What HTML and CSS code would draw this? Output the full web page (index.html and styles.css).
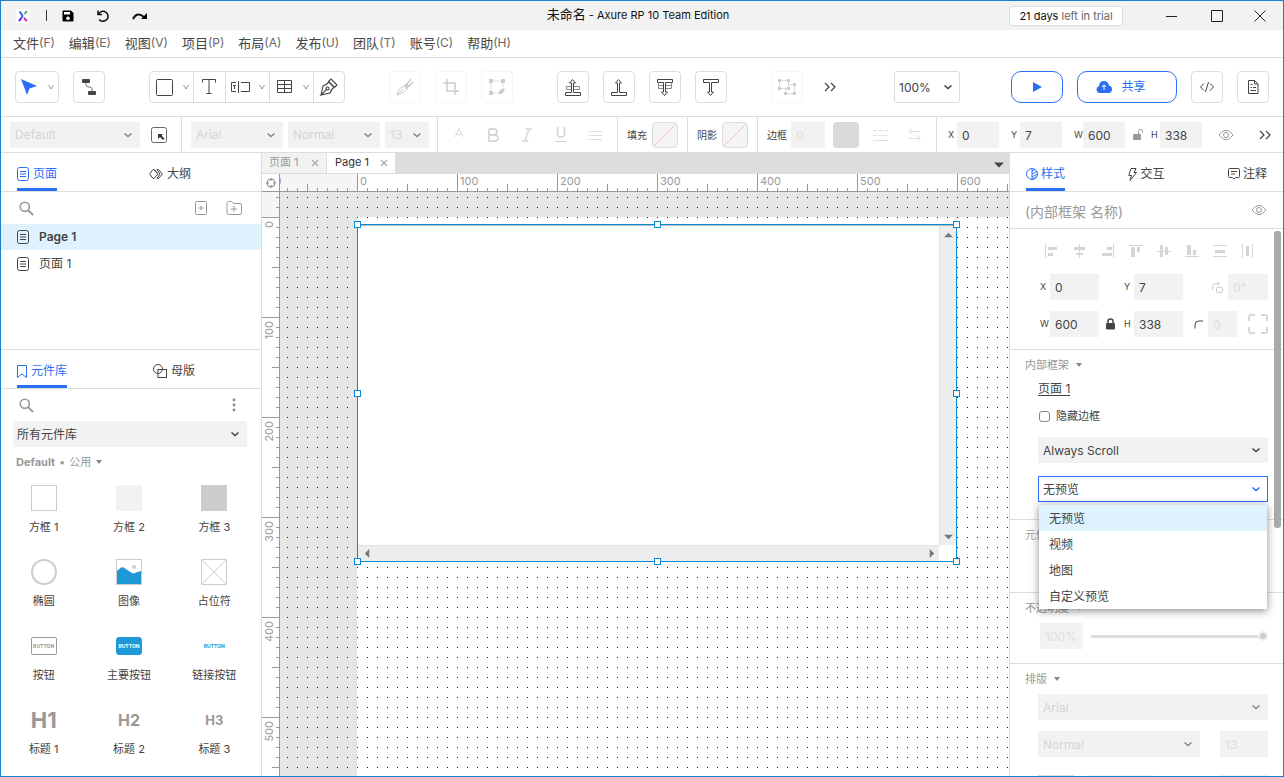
FILE: index.html
```html
<!DOCTYPE html>
<html lang="zh-CN">
<head>
<meta charset="utf-8">
<title>未命名 - Axure RP 10 Team Edition</title>
<link rel="stylesheet" href="styles.css">
</head>
<body>
<svg class="defs" aria-hidden="true">
  <symbol id="chev" viewBox="0 0 10 10"><path d="M1.500 3.500L5 6.500L8.500 3.500" fill="none" stroke="currentColor" stroke-width="1.600"/></symbol>
  <symbol id="thin" viewBox="0 0 8 8"><path d="M1.500 2 L4 6 L6.500 2" fill="none" stroke="currentColor" stroke-width="1"/></symbol>
  <symbol id="tri" viewBox="0 0 8 6"><path d="M1 1 H7 L4 5 Z" fill="currentColor"/></symbol>
  <symbol id="more" viewBox="0 0 12 10"><path d="M1 1 L5 5 L1 9 M7 1 L11 5 L7 9" fill="none" stroke="currentColor" stroke-width="1.200"/></symbol>
  <symbol id="page" viewBox="0 0 12 14"><g fill="none" stroke="currentColor"><rect x=".5" y=".5" width="11" height="13" rx="2"/><path d="M3 4.500H9M3 7H9M3 9.500H9"/></g></symbol>
  <symbol id="search" viewBox="0 0 15 15"><circle cx="5.800" cy="5.800" r="4.600" fill="none" stroke="currentColor" stroke-width="1.600"/><path d="M9 9L14 14" stroke="currentColor" stroke-width="2"/></symbol>
  <symbol id="eye" viewBox="0 0 16 12"><g fill="none" stroke="currentColor"><path d="M1 6 Q8 -3.500 15 6 Q8 15.500 1 6Z"/><circle cx="8" cy="6" r="2.500"/></g></symbol>
  <symbol id="close" viewBox="0 0 8 8"><path d="M1 1L7 7M7 1L1 7" stroke="currentColor" stroke-width="1.200"/></symbol>
</svg>
<div class="window">
  <header class="titlebar">
    <div class="quick">
      <svg class="logo" viewBox="0 0 14 14"><rect width="14" height="14" rx="2" fill="#fff"/><g fill="none" stroke-width="2"><path d="M3.500 2.500L6 5.800Q7 7 6 8.200L3 12" stroke="#2a62ee"/><path d="M3 12L5 9.500" stroke="#7b2ff0"/><path d="M10.800 2L8.500 5" stroke="#3db54a"/><path d="M8 9L10.800 12.200" stroke="#c924c9"/></g></svg>
      <span class="bar"></span>
      <button class="plain" aria-label="保存"><svg class="i12" viewBox="0 0 12 12"><path d="M1.500 .5H9L11.500 3V10.500Q11.500 11.500 10.500 11.500H1.500Q.5 11.500 .5 10.500V1.500Q.5 .5 1.500 .5Z"/><path d="M2 2H8V4.500H2Z" fill="#fff"/><circle cx="6" cy="8.200" r="1.800" fill="#fff"/></svg></button>
      <button class="plain" aria-label="撤销"><svg class="i12" viewBox="0 0 12 12"><path d="M1 .5V4.500H5M1.500 4.200A5 5 0 1 1 2.200 9.500" fill="none" stroke="#111" stroke-width="1.500"/></svg></button>
      <button class="plain" aria-label="重做"><svg class="i16" viewBox="0 0 16 12"><path d="M1 9Q5 1 12 7" fill="none" stroke="#111" stroke-width="2"/><path d="M15 3V9H9Z"/></svg></button>
    </div>
    <h1 class="title"><span>未命名</span> - Axure RP 10 Team Edition</h1>
    <div class="winctl">
      <button class="trial"><b>21 days</b> left in trial</button>
      <button class="plain" aria-label="最小化"><svg class="i12" viewBox="0 0 12 12"><path d="M0 6.500H11" stroke="#222"/></svg></button>
      <button class="plain" aria-label="最大化"><svg class="i12" viewBox="0 0 12 12"><path d="M.5 .5H11.500V11.500H.5Z" fill="none" stroke="#222"/></svg></button>
      <button class="plain" aria-label="关闭"><svg class="i12" viewBox="0 0 12 12"><path d="M.5 .5L11.500 11.500M11.500 .5L.5 11.500" stroke="#222"/></svg></button>
    </div>
  </header>

  <nav class="menubar">
    <button>文件<span>(F)</span></button><button>编辑<span>(E)</span></button><button>视图<span>(V)</span></button><button>项目<span>(P)</span></button><button>布局<span>(A)</span></button><button>发布<span>(U)</span></button><button>团队<span>(T)</span></button><button>账号<span>(C)</span></button><button>帮助<span>(H)</span></button>
  </nav>

  <div class="toolbar">
    <div class="cluster">
      <button class="tool wide" aria-label="选择"><svg class="i20" viewBox="0 0 20 20"><path d="M2 2L18 9L10.500 11.500L8 18Z" fill="#2a6ef5"/></svg><svg class="i8"><use href="#thin"/></svg></button>
      <button class="tool" aria-label="连接"><svg class="i20" viewBox="0 0 20 20"><rect x="3" y="2" width="8" height="4" rx="1" fill="#444"/><rect x="9" y="14" width="8" height="4" rx="1" fill="#444"/><path d="M7 6V8Q7 10 10 10Q13 10 13 12V14" fill="none" stroke="#777"/></svg></button>
    </div>
    <div class="segment">
      <button class="wide" aria-label="矩形"><svg class="i20" viewBox="0 0 20 20"><rect x="2.500" y="2.500" width="16" height="16" rx="1" fill="none" stroke="#444"/></svg><svg class="i8"><use href="#thin"/></svg></button>
      <button aria-label="文本"><svg class="i20" viewBox="0 0 20 20"><path d="M2.500 5.500V2.500H15.500V5.500M9 2.500V16.500M6.500 16.500H11.500" fill="none" stroke="#444"/></svg></button>
      <button class="wide" aria-label="表单"><svg class="i20" viewBox="0 0 20 20"><path d="M6 5.500H1.500V14.500H6M8.500 4V16M11 5.500H19.500V14.500H11M3 8.500H6M4.500 8.500V12" fill="none" stroke="#444"/></svg><svg class="i8"><use href="#thin"/></svg></button>
      <button class="wide" aria-label="表格"><svg class="i20" viewBox="0 0 20 20"><path d="M3.500 3.500H17.500V15.500H3.500ZM3.500 7.500H17.500M3.500 11.500H17.500M10.500 3.500V15.500" fill="none" stroke="#444"/></svg><svg class="i8"><use href="#thin"/></svg></button>
      <button aria-label="钢笔"><svg class="i20" viewBox="0 0 20 20"><g fill="none" stroke="#444" stroke-width="1.100"><path d="M2 18L4 9Q7 8 10 5L15 10Q12 13 11 16L2 18L8 12"/><circle cx="8.500" cy="11.500" r="1.500"/><path d="M9.500 4.500L12 2L18 8L15.500 10.500Z"/></g></svg></button>
    </div>
    <div class="cluster off">
      <button class="tool" disabled aria-label="切割"><svg class="i20" viewBox="0 0 20 20"><path d="M2 18Q3 11 9 9L12 12L9 15Z" fill="none" stroke="#ccc"/><path d="M2 18L8 12" stroke="#ccc"/><path d="M9 8L12 6L15 9L12 12Z" fill="#ccc"/><path d="M12 7L16 2M14 9L18 5" stroke="#ccc" stroke-width="1.500"/></svg></button>
      <button class="tool" disabled aria-label="裁剪"><svg class="i20" viewBox="0 0 20 20"><path d="M6 2V14H18M2 6H14V18" fill="none" stroke="#ccc" stroke-width="1.500"/></svg></button>
      <button class="tool" disabled aria-label="编辑点"><svg class="i20" viewBox="0 0 20 20"><path d="M4 4H16V10M4 4V16H10" fill="none" stroke="#ddd"/><path d="M2 2H6V6H2ZM14 2H18V6H14ZM2 14H6V18H2ZM11 17L12 14L16 11L18 13L15 17Z" fill="#ccc"/></svg></button>
    </div>
    <div class="cluster">
      <button class="tool" aria-label="置于顶层"><svg class="i20" viewBox="0 0 20 20"><g fill="none" stroke="#444"><path d="M2.500 15.500H8.500V6H6.500L9.500 2.500L12.500 6H10.500V15.500H17.500V18.500H2.500Z"/><path d="M8 9.500H3.500V12.500H8M11 9.500H16.500V12.500H11" stroke="#888"/></g></svg></button>
      <button class="tool" aria-label="上移一层"><svg class="i20" viewBox="0 0 20 20"><path d="M2.500 15.500H8.500V6H6.500L9.500 2.500L12.500 6H10.500V15.500H17.500V18.500H2.500Z" fill="none" stroke="#444"/></svg></button>
      <button class="tool" aria-label="置于底层"><svg class="i20" viewBox="0 0 20 20"><g fill="none" stroke="#444"><path d="M2.500 5.500H8.500V15H6.500L9.500 18.500L12.500 15H10.500V5.500H17.500V2.500H2.500Z"/><path d="M8 8.500H3.500V5.500M8 11.500H3.500V8.500M11 8.500H16.500V5.500M11 11.500H16.500V8.500" stroke="#888"/></g></svg></button>
      <button class="tool" aria-label="下移一层"><svg class="i20" viewBox="0 0 20 20"><path d="M2.500 5.500H8.500V15H6.500L9.500 18.500L12.500 15H10.500V5.500H17.500V2.500H2.500Z" fill="none" stroke="#444"/></svg></button>
    </div>
    <div class="cluster off">
      <button class="tool" disabled aria-label="组合"><svg class="i20" viewBox="0 0 20 20"><path d="M2.500 3.500H11.500V11.500H2.500ZM8.500 16.500H17.500V7.500H12M8.500 12V16" fill="none" stroke="#ddd"/><path d="M1 2H4V5H1ZM10 2H13V5H10ZM1 10H4V13H1ZM10 10H13V13H10ZM16 6H19V9H16ZM16 15H19V18H16ZM7 15H10V18H7Z" fill="#ccc"/></svg></button>
    </div>
    <button class="plain morebtn" aria-label="更多"><svg class="i12"><use href="#more"/></svg></button>
    <div class="pick zoom"><select aria-label="缩放"><option>100%</option></select><svg><use href="#chev"/></svg></div>
    <div class="cluster actions">
      <button class="tool blue play" aria-label="预览"><svg class="i12" viewBox="0 0 12 12"><path d="M2 1L11 6L2 11Z" fill="#2a6ef5"/></svg></button>
      <button class="tool blue share"><svg class="i16" viewBox="0 0 16 12"><path d="M4 12A3.600 3.600 0 0 1 3 5Q3.500 0 8 0Q12 0 13 4.500A3.800 3.800 0 0 1 12.500 12Z" fill="#2a6ef5"/><path d="M8 9V4M6 6L8 3.800L10 6" fill="none" stroke="#fff"/></svg>共享</button>
      <button class="tool" aria-label="代码"><svg class="i16" viewBox="0 0 16 12"><path d="M5 2.500L1.500 6L5 9.500M11 2.500L14.500 6L11 9.500M9.500 1L6.500 11" fill="none" stroke="#444"/></svg></button>
      <button class="tool" aria-label="文档"><svg class="i16" viewBox="0 0 16 16"><path d="M3.500 1.500H9.500L13 5V14.500H3.500ZM9.500 1.500V5H13M5.500 8.500H7M8 8.500H11M5.500 11.500H11M5.500 5.500H7.500" fill="none" stroke="#444"/></svg></button>
    </div>
  </div>

  <div class="stylebar">
    <div class="grp g1">
      <div class="pick dim w130"><select disabled aria-label="样式"><option>Default</option></select><svg><use href="#chev"/></svg></div>
      <button class="plain" aria-label="更新样式"><svg class="i16" viewBox="0 0 16 16"><rect x=".5" y=".5" width="15" height="15" rx="2" fill="none" stroke="#666"/><path d="M7 7H12L10.500 8.500L13.500 11.500L12 13L9 10L7 12Z" fill="#333"/></svg></button>
    </div>
    <div class="grp g2">
      <div class="pick dim w92"><select disabled aria-label="字体"><option>Arial</option></select><svg><use href="#chev"/></svg></div>
      <div class="pick dim w92"><select disabled aria-label="字形"><option>Normal</option></select><svg><use href="#chev"/></svg></div>
      <div class="pick dim w44"><select disabled aria-label="字号"><option>13</option></select><svg><use href="#chev"/></svg></div>
    </div>
    <div class="grp g3">
      <button class="plain" disabled aria-label="颜色"><svg class="i16" viewBox="0 0 16 16"><path d="M4 10L8 1.500L12 10M5.500 7.500H10.500" fill="none" stroke="#ddd"/></svg></button>
      <button class="plain" disabled aria-label="粗体"><svg class="i16" viewBox="0 0 16 16"><path d="M4 2H8.500Q12 2 12 5Q12 8 8.500 8H4M8.500 8Q13 8 13 11Q13 14 9 14H4V2" fill="none" stroke="#d8d8d8" stroke-width="1.800"/></svg></button>
      <button class="plain" disabled aria-label="斜体"><svg class="i16" viewBox="0 0 16 16"><path d="M6.500 2H13M3 14H9.500M10 2L6 14" fill="none" stroke="#d8d8d8" stroke-width="1.500"/></svg></button>
      <button class="plain" disabled aria-label="下划线"><svg class="i16" viewBox="0 0 16 16"><path d="M4.500 0V6.500Q4.500 10 8 10Q11.500 10 11.500 6.500V0" fill="none" stroke="#d8d8d8" stroke-width="1.800"/><path d="M3 14.500H13" stroke="#ccc"/></svg></button>
      <button class="plain" disabled aria-label="列表"><svg class="i16" viewBox="0 0 16 16"><path d="M4 4.500H15M4 8.500H15M4 12.500H15M1 4.500H3M1 8.500H3M1 12.500H3" stroke="#ddd"/></svg></button>
    </div>
    <div class="grp g4"><span>填充</span><button class="swatch none" aria-label="填充"><svg viewBox="0 0 24 24"><path d="M1 23L23 1" stroke="#f8c4c0"/></svg></button></div>
    <div class="grp g4"><span>阴影</span><button class="swatch none" aria-label="阴影"><svg viewBox="0 0 24 24"><path d="M1 23L23 1" stroke="#f8c4c0"/></svg></button></div>
    <div class="grp g5"><label for="bw">边框</label><input id="bw" class="fld w34" value="0" disabled><button class="swatch solid" aria-label="边框颜色"></button>
      <button class="plain line" disabled aria-label="线型"><svg class="i16" viewBox="0 0 16 16"><path d="M1 3.500H16" stroke="#ddd" stroke-dasharray="4 2"/><path d="M1 8.500H16" stroke="#ddd" stroke-dasharray="2 1"/><path d="M1 13.500H16" stroke="#ddd"/></svg></button>
      <button class="plain" disabled aria-label="箭头"><svg class="i16" viewBox="0 0 16 16"><path d="M14 4.500H3M6 1.500L3 4.500L6 7.500M3 11.500H14M11 8.500L14 11.500L11 14.500" fill="none" stroke="#ddd"/></svg></button></div>
    <div class="grp g6">
      <label for="tx">X</label><input id="tx" class="fld w42" value="0">
      <label for="ty">Y</label><input id="ty" class="fld w42" value="7">
      <label for="tw">W</label><input id="tw" class="fld w42" value="600">
      <svg class="lock" viewBox="0 0 10 12"><rect y="5" width="8" height="6" rx="1" fill="#999"/><path d="M5.500 5V2.500Q5.500 .5 7.500 .5Q9.500 .5 9.500 2.500V3.500" fill="none" stroke="#999"/></svg>
      <label for="th">H</label><input id="th" class="fld w42" value="338">
      <button class="plain eye" aria-label="显示"><svg class="i16e"><use href="#eye"/></svg></button>
      <button class="plain" aria-label="更多"><svg class="i12"><use href="#more"/></svg></button>
    </div>
  </div>

  <main class="work">
    <aside class="left">
      <section class="pages">
        <div class="tabs"><button class="tab on"><svg class="pg"><use href="#page"/></svg>页面</button><button class="tab t2"><svg class="i14" viewBox="0 0 14 12"><path d="M5 1.500H4L1 5.500Q.5 6 1 6.500L4 10.500H5L9 6ZM5 1.500L9 6M8 1.500H9.500L13 5.500Q13.500 6 13 6.500L9.500 10.500H8M8 1.500L11 6L8 10.500" fill="none" stroke="#444"/></svg>大纲</button></div>
        <div class="find"><svg class="i14s"><use href="#search"/></svg><span class="fill"></span>
          <button class="plain" aria-label="添加页面"><svg class="pg" viewBox="0 0 12 14"><path d="M1.500 .5H10.500Q11.500 .5 11.500 1.500V12.500Q11.500 13.500 10.500 13.500H1.500Q.5 13.500 .5 12.500V1.500Q.5 .5 1.500 .5ZM3.500 7H8.500M6 4.500V9.500" fill="none" stroke="#999"/></svg></button>
          <button class="plain" aria-label="添加文件夹"><svg class="i16" viewBox="0 0 16 16"><path d="M2 1.500H5.500L7.500 3.500H14Q15.500 3.500 15.500 5V13Q15.500 14.500 14 14.500H2.500Q1 14.500 1 13V2.500ZM5 9H11M8 6V12" fill="none" stroke="#999"/></svg></button></div>
        <ul class="list"><li class="sel"><svg class="pg"><use href="#page"/></svg>Page 1</li><li><svg class="pg"><use href="#page"/></svg><span>页面 1</span></li></ul>
      </section>
      <section class="library">
        <div class="tabs"><button class="tab on"><svg class="bm" viewBox="0 0 10 13"><path d="M.5 .5H9.500V12.500L5 9L.5 12.500Z" fill="none" stroke="currentColor"/></svg>元件库</button><button class="tab t3"><svg class="i14b" viewBox="0 0 14 14"><circle cx="5" cy="5" r="4.500" fill="none" stroke="#444"/><rect x="5" y="5.500" width="8.500" height="8" fill="none" stroke="#444"/></svg>母版</button></div>
        <div class="find"><svg class="i14s"><use href="#search"/></svg><span class="fill"></span>
          <button class="plain" aria-label="选项"><svg class="i16" viewBox="0 0 16 16"><g fill="#888"><circle cx="8" cy="3" r="1.400"/><circle cx="8" cy="8" r="1.400"/><circle cx="8" cy="13" r="1.400"/></g></svg></button></div>
        <div class="pick libpick"><select aria-label="元件库"><option>所有元件库</option></select><svg><use href="#chev"/></svg></div>
        <button class="libhead"><b>Default</b><span>•</span><span>公用</span><svg class="tri"><use href="#tri"/></svg></button>
        <div class="widgets">
          <figure><div class="art"><i class="box b1"></i></div><figcaption>方框 1</figcaption></figure>
          <figure><div class="art"><i class="box b2"></i></div><figcaption>方框 2</figcaption></figure>
          <figure><div class="art"><i class="box b3"></i></div><figcaption>方框 3</figcaption></figure>
          <figure><div class="art"><i class="box oval"></i></div><figcaption>椭圆</figcaption></figure>
          <figure><div class="art"><svg class="i26" viewBox="0 0 26 26"><rect x=".5" y=".5" width="25" height="25" fill="#fff" stroke="#ccc"/><path d="M1 12L5 8.500Q7 7.500 9 9.500L16 14Q18 15 20 13.500L25 12V25H1Z" fill="#1e98d7"/><circle cx="18" cy="8" r="2" fill="#ccc"/></svg></div><figcaption>图像</figcaption></figure>
          <figure><div class="art"><svg class="i26" viewBox="0 0 26 26"><path d="M.5 .5H25.500V25.500H.5ZM.5 .5L25.500 25.500M25.500 .5L.5 25.500" fill="none" stroke="#ccc"/></svg></div><figcaption>占位符</figcaption></figure>
          <figure><div class="art"><span class="btn">BUTTON</span></div><figcaption>按钮</figcaption></figure>
          <figure><div class="art"><span class="btn pri">BUTTON</span></div><figcaption>主要按钮</figcaption></figure>
          <figure><div class="art"><span class="btn lnk">BUTTON</span></div><figcaption>链接按钮</figcaption></figure>
          <figure><div class="art"><b class="h h1">H1</b></div><figcaption>标题 1</figcaption></figure>
          <figure><div class="art"><b class="h h2">H2</b></div><figcaption>标题 2</figcaption></figure>
          <figure><div class="art"><b class="h h3">H3</b></div><figcaption>标题 3</figcaption></figure>
        </div>
      </section>
    </aside>

    <section class="center">
      <div class="doctabs"><button class="doc">页面 1<svg class="i8"><use href="#close"/></svg></button><button class="doc cur">Page 1<svg class="i8"><use href="#close"/></svg></button><span class="fill"></span><button class="plain" aria-label="标签列表"><svg class="drop" viewBox="0 0 10 6"><path d="M0 .5H10L5 5.500Z" fill="#444"/></svg></button></div>
      <div class="stage">
        <div class="corner"><svg class="i10" viewBox="0 0 10 10"><circle cx="5" cy="5" r="4" fill="none" stroke="#888"/><path d="M5 0V3M5 7V10M0 5H3M7 5H10" stroke="#888"/></svg></div>
        <div class="hruler"><div class="hneg"><span>-100</span></div><div>0</div><div>100</div><div>200</div><div>300</div><div>400</div><div>500</div><div>600</div></div>
        <div class="vruler"><div class="vneg"></div><div><span>0</span></div><div><span>100</span></div><div><span>200</span></div><div><span>300</span></div><div><span>400</span></div><div><span>500</span></div></div>
        <div class="canvas">
          <div class="sheet"></div>
          <div class="dots"></div>
          <div class="frame">
            <div class="content"></div>
            <div class="vbar"><svg class="arr" viewBox="0 0 10 6"><path d="M0 5.500H10L5 .5Z"/></svg><svg class="arr" viewBox="0 0 10 6"><path d="M0 .5H10L5 5.500Z"/></svg></div>
            <div class="hbar"><svg class="arrh" viewBox="0 0 6 10"><path d="M5.500 0V10L.5 5Z"/></svg><svg class="arrh" viewBox="0 0 6 10"><path d="M.5 0V10L5.500 5Z"/></svg></div>
            <i class="hd n w"></i><i class="hd n c"></i><i class="hd n e"></i><i class="hd m w"></i><i class="hd m e"></i><i class="hd s w"></i><i class="hd s c"></i><i class="hd s e"></i>
          </div>
        </div>
      </div>
    </section>

    <aside class="right">
      <div class="tabs"><button class="tab on"><svg class="i12" viewBox="0 0 12 12"><path d="M6 .5A5.500 5.500 0 1 0 6 11.500A5.500 5.500 0 1 0 6 .5V11.500M6 3L9 1.500M6 6L11 3.500M6 9L11.500 6M6 11.500L11 8.500" fill="none" stroke="currentColor"/></svg>样式</button><button class="tab"><svg class="bolt" viewBox="0 0 9 13"><path d="M3 .5H8L6 4.500H8.500L2 12.500L3.500 7.500H.8Z" fill="none" stroke="#444"/></svg>交互</button><button class="tab"><svg class="i12" viewBox="0 0 12 12"><path d="M1.500 .5H10.500Q11.500 .5 11.500 1.500V8.500Q11.500 9.500 10.500 9.500H7.500L6 11L4.500 9.500H1.500Q.5 9.500 .5 8.500V1.500Q.5 .5 1.500 .5ZM3 3.500H9M3 6H7" fill="none" stroke="#444"/></svg>注释</button></div>
      <div class="name"><input aria-label="名称" placeholder="(内部框架 名称)"><button class="plain eye" aria-label="显示"><svg class="i16e"><use href="#eye"/></svg></button></div>
      <div class="scroll">
        <span class="thumb"></span>
        <section class="geo">
          <div class="aligns">
            <svg viewBox="0 0 14 14"><path d="M0 0H1V14H0ZM3 3H12V6H3ZM3 9H8V12H3Z"/></svg>
            <svg viewBox="0 0 14 14"><path d="M6 0H7V14H6ZM1 3H12V6H1ZM3 9H10V11H3Z"/></svg>
            <svg viewBox="0 0 14 14"><path d="M12 0H13V14H12ZM6 3H11V6H6ZM1 9H11V12H1Z"/></svg>
            <svg viewBox="0 0 14 14"><path d="M0 1H14V2H0ZM2 3H6V13H2ZM8 3H11V8H8Z"/></svg>
            <svg viewBox="0 0 14 14"><path d="M0 7H14V8H0ZM3 1H6V13H3ZM8 3H11V11H8Z"/></svg>
            <svg viewBox="0 0 14 14"><path d="M0 12H14V13H0ZM2 1H6V11H2ZM8 6H11V11H8Z"/></svg>
            <svg viewBox="0 0 14 14"><path d="M0 1H14V2H0ZM2 6H12V9H2ZM0 12H14V13H0Z"/></svg>
            <svg viewBox="0 0 14 14"><path d="M1 0H2V14H1ZM5 2H8V12H5ZM11 0H12V14H11Z"/></svg>
          </div>
          <div class="row"><label for="px">X</label><input id="px" class="fld w49" value="0"><span class="slot"></span><label for="py">Y</label><input id="py" class="fld w49" value="7"><span class="fill"></span><svg class="i12 rot" viewBox="0 0 12 12"><path d="M.5 9V6Q.5 2.500 4 2.500H7M5 .5L7 2.500L5 4.500" fill="none" stroke="#ccc"/><rect x="4.500" y="6.500" width="6" height="5" rx="1" fill="none" stroke="#ccc"/></svg><input class="fld w40" aria-label="旋转" value="0°" disabled></div>
          <div class="row"><label for="pw">W</label><input id="pw" class="fld w49" value="600"><span class="slot"><svg class="i12" viewBox="0 0 12 12"><rect x="2" y="5" width="9" height="6.500" rx="1" fill="#444"/><path d="M4 5V3Q4 1 6.500 1Q9 1 9 3V5" fill="none" stroke="#444" stroke-width="1.500"/></svg></span><label for="ph">H</label><input id="ph" class="fld w49" value="338"><svg class="i10 rad" viewBox="0 0 10 10"><path d="M1 9.500V6Q1 2 5 2H9" fill="none" stroke="#444"/></svg><input class="fld w29" aria-label="圆角" value="0" disabled><span class="fill"></span><svg class="i20" viewBox="0 0 20 20"><path d="M7 1H3Q1 1 1 3V7M13 1H17Q19 1 19 3V7M1 13V17Q1 19 3 19H7M19 13V17Q19 19 17 19H13" fill="none" stroke="#ccc" stroke-width="1.500"/></svg></div>
        </section>
        <section class="inner">
          <h2>内部框架<svg class="tri"><use href="#tri"/></svg></h2>
          <a href="#page1" class="link">页面 1</a>
          <label class="check"><input type="checkbox">隐藏边框</label>
          <div class="pick s1"><select aria-label="滚动"><option>Always Scroll</option></select><svg><use href="#chev"/></svg></div>
          <div class="pick active"><select aria-label="预览"><option>无预览</option></select><svg><use href="#chev"/></svg>
            <ul class="menu" role="listbox" aria-label="预览选项"><li role="option" aria-selected="true" class="sel">无预览</li><li role="option">视频</li><li role="option">地图</li><li role="option">自定义预览</li></ul></div>
        </section>
        <section class="part"><h2>元件</h2></section>
        <section class="opac"><h2>不透明度<svg class="tri"><use href="#tri"/></svg></h2><div class="row"><input class="fld w43" aria-label="不透明度" value="100%" disabled><input type="range" aria-label="不透明度滑块" min="0" max="100" value="100" disabled></div></section>
        <section class="type"><h2>排版<svg class="tri"><use href="#tri"/></svg></h2>
          <div class="pick dim"><select disabled aria-label="字体"><option>Arial</option></select><svg><use href="#chev"/></svg></div>
          <div class="row"><div class="pick dim grow"><select disabled aria-label="字形"><option>Normal</option></select><svg><use href="#chev"/></svg></div><input class="fld w48" aria-label="字号" value="13" disabled></div>
          <div class="next"><i class="n1"></i><i class="n2"></i><span class="fill"></span><i class="n3"></i></div>
        </section>
      </div>
    </aside>
  </main>
</div>
</body>
</html>
```
FILE: styles.css
```css
* { box-sizing: border-box; }
html, body { height: 100%; margin: 0; }
body { font: 12px/16px Inter, "Noto Sans CJK SC", sans-serif; color: #444; background: #fff; overflow: hidden; }
button, input, select { font: inherit; color: inherit; margin: 0; }
button { background: none; border: 0; padding: 0; display: flex; align-items: center; justify-content: center; }
ul, figure, h1, h2 { margin: 0; padding: 0; list-style: none; }
svg { display: block; flex: none; }
.defs { position: absolute; width: 0; height: 0; }
.fill { flex: 1; }
.window { height: 100vh; display: flex; flex-direction: column; border: 1px solid #1a7fcc; overflow: hidden; }

.i8 { width: 8px; height: 8px; }
.i10 { width: 10px; height: 10px; }
.i12 { width: 12px; height: 12px; }
.i14 { width: 14px; height: 12px; }
.i14b { width: 14px; height: 14px; }
.i14s { width: 15px; height: 15px; color: #999; }
.i16 { width: 16px; height: 16px; }
.i16e { width: 16px; height: 12px; color: #999; }
.i20 { width: 20px; height: 20px; }
.i26 { width: 26px; height: 26px; }
.pg { width: 12px; height: 14px; }
.bm { width: 10px; height: 13px; }
.bolt { width: 9px; height: 13px; }
.tri { width: 8px; height: 6px; color: #888; }

.titlebar { flex: none; height: 29px; background: #f2f2f2; display: grid; grid-template-columns: 1fr auto 1fr; align-items: center; padding-right: 8px; color: #111; }
.quick { display: flex; align-items: center; padding-left: 15px; }
.logo { width: 14px; height: 14px; }
.bar { width: 1px; height: 11px; background: #333; margin: 0 15px 0 16px; }
.quick .plain { margin-right: 23px; }
.title { font-size: 11px; font-weight: 400; line-height: 16px; padding-bottom: 3px; }
.title span { font-size: 13px; }
.winctl { display: flex; align-items: center; justify-content: flex-end; }
.winctl .plain { width: 45px; }
.winctl .plain:last-child { width: 36px; padding-left: 6px; }
.trial { width: 114px; height: 20px; background: #fff; border: 1px solid #ddd; border-radius: 3px; font-size: 11px; color: #666; margin-right: 26px; white-space: pre; }
.trial b { font-weight: 400; color: #111; }

.menubar { flex: none; height: 28px; border-bottom: 1px solid #ddd; display: flex; align-items: center; gap: 14px; padding: 0 12px 2px; font-size: 13px; }
.menubar span { font-size: 12px; color: #666; }

.toolbar { flex: none; height: 59px; border-bottom: 1px solid #ddd; display: flex; align-items: center; padding: 0 14px; }
.cluster { display: flex; gap: 14px; }
.cluster, .segment { margin-right: 44px; }
.tool { width: 32px; height: 32px; border: 1px solid #ddd; border-radius: 4px; }
.wide { gap: 8px; color: #999; }
.tool.wide { width: 44px; }
.off .tool { border-color: #f5f5f5; }
.off:nth-of-type(5) { margin-right: 17px; }
.segment { display: flex; border: 1px solid #ddd; border-radius: 4px; height: 32px; }
.segment button { width: 32px; }
.segment button.wide { width: 44px; }
.segment button + button { border-left: 1px solid #ddd; }
.segment button:last-child { width: 31px; }
.segment button:first-child { width: 43px; }
.morebtn { width: 20px; }
.zoom { margin-left: auto; width: 66px; }
.pick.zoom select { height: 32px; background: #fff; border: 1px solid #ddd; border-radius: 3px; padding-left: 4px; }
.cluster.actions { margin: 0 0 0 51px; }
.blue { border: 1px solid #2a6ef5; border-radius: 10px; color: #2a6ef5; }
.play { width: 52px; }
.share { width: 100px; gap: 9px; padding-right: 12px; }

.pick { position: relative; }
.pick select { appearance: none; display: block; width: 100%; height: 26px; border: 0; border-radius: 0; background: #f2f2f2; padding: 1px 20px 0 5px; opacity: 1; }
.pick > svg { position: absolute; right: 7px; top: 50%; margin-top: -5px; width: 10px; height: 10px; pointer-events: none; }
.dim select { color: #d5d5d5; }
.dim > svg { color: #888; }
.fld { height: 26px; border: 0; background: #f2f2f2; padding: 1px 0 0 5px; min-width: 0; flex: none; }
.fld:disabled { color: #ddd; }
.w29 { width: 29px; } .w34 { width: 34px; } .w40 { width: 40px; } .w42 { width: 42px; } .w43 { width: 43px; }
.w44 { width: 44px; } .w48 { width: 48px; } .w49 { width: 49px; } .w92 { width: 92px; } .w130 { width: 130px; }

.stylebar { flex: none; height: 36px; border-bottom: 1px solid #ddd; display: flex; }
.grp { display: flex; align-items: center; padding: 0 9px; }
.grp + .grp { border-left: 1px solid #ddd; }
.g1 { gap: 11px; padding-right: 14px; }
.g2 { gap: 5px; padding-right: 8px; }
.g3 { gap: 18px; padding: 0 14px 0 13px; }
.g4 { gap: 5px; font-size: 10px; }
.swatch { width: 26px; height: 26px; border-radius: 4px; }
.none { border: 1px solid #ddd; background: #f4f4f4; }
.none svg { width: 24px; height: 24px; }
.solid { background: #d9d9d9; }
.g5 { padding-right: 14px; font-size: 10px; }
.g5 input { margin: 0 8px 0 4px; font-size: 12px; }
.g5 .line { margin: 0 18px 0 13px; }
.g6 { flex: 1; padding: 0 12px 0 11px; }
.g6 label { width: 9px; font-size: 9px; }
.g6 .fld { margin-right: 12px; }
.g6 #tw { margin-right: 8px; }
.lock { width: 10px; height: 12px; margin-right: 8px; }
.g6 .eye { margin-left: auto; margin-right: 25px; }

.work { flex: 1; min-height: 0; display: flex; }
.left { width: 261px; flex: none; border-right: 1px solid #ddd; display: flex; flex-direction: column; overflow: hidden; }
.pages { flex: 0 0 197px; border-bottom: 1px solid #ddd; }
.tabs { height: 39px; border-bottom: 1px solid #ddd; display: flex; padding: 0 16px; }
.tab { height: 38px; border-bottom: 3px solid transparent; gap: 4px; padding-top: 7px; }
.tab.on { color: #2a6ef5; border-color: #2a6ef5; }
.t2 { margin-left: 92px; }
.t3 { margin-left: 86px; }
.find { height: 32px; display: flex; align-items: center; padding: 0 19px 0 18px; gap: 19px; }
.list li { height: 26px; display: flex; align-items: center; gap: 10px; padding-left: 16px; }
.list li + li { margin-top: 1px; }
.list .sel { background: #dff2fd; font-weight: 600; }
.libpick { margin: 0 14px 0 12px; }
.libpick select { padding-left: 4px; padding-top: 2px; }
.libhead { margin: 7px 0 0 15px; font-size: 11px; color: #999; gap: 4px; }
.widgets { display: grid; grid-template-columns: repeat(3, 1fr); padding: 8px 4px 0 0; }
.widgets figure { height: 74px; padding-top: 7px; text-align: center; font-size: 11px; }
.art { height: 26px; display: flex; align-items: center; justify-content: center; margin-bottom: 8px; }
.box { width: 26px; height: 26px; }
.b1 { border: 1px solid #ccc; } .b2 { background: #f2f2f2; } .b3 { background: #ccccca; }
.oval { border: 2px solid #ccc; border-radius: 50%; }
.btn { width: 26px; height: 18px; border: 1px solid #999; border-radius: 2px; color: #999; font-size: 5px; font-weight: 700; line-height: 16px; }
.pri { background: #1e98d7; border-color: #1e98d7; color: #fff; border-radius: 3px; }
.lnk { border-color: transparent; color: #1e98d7; }
.h { color: #999; line-height: 26px; }
.h1 { font-size: 22px; } .h2 { font-size: 16px; } .h3 { font-size: 13px; }

.center { flex: 1; min-width: 0; display: flex; flex-direction: column; }
.doctabs { flex: none; height: 21px; background: #ddd; display: flex; padding-right: 5px; border-bottom: 1px solid #ddd; }
.doc { font-size: 11px; justify-content: space-between; width: 65px; padding: 0 7px 2px; background: #f2f2f2; color: #999; border-right: 1px solid #ddd; }
.doc svg { color: #aaa; margin-top: 2px; }
.cur { width: 68px; background: #fff; color: #333; border: 0; padding-left: 8px; }
.drop { width: 10px; height: 6px; margin-top: 4px; }
.stage { flex: 1; min-height: 0; display: grid; grid-template: 18px 1fr / 18px 1fr; overflow: hidden; }
.corner { background: #fff; border: 1px solid #999; border-width: 0 1px 1px 0; display: flex; align-items: center; justify-content: center; }
.hruler { display: flex; overflow: hidden; border-bottom: 1px solid #999; color: #999; }
.hruler > div { flex: none; width: 100px; border-left: 1px solid #999; padding-left: 2px; font-size: 11px; line-height: 15px;
  background: linear-gradient(to right, transparent 49px, #999 49px, #999 50px, transparent 50px) 0 100% / 100px 7px no-repeat, linear-gradient(to right, transparent 9px, #999 9px) 0 100% / 10px 3px repeat-x; }
.hruler > .hneg { width: 77px; border: 0; padding: 0; overflow: hidden; background-color: #f5f5f5; background-position: -22px 100%, -2px 100%; }
.hneg span { margin-left: -22px; }
.vruler { border-right: 1px solid #999; overflow: hidden; color: #999; }
.vruler > div { height: 100px; border-top: 1px solid #999; padding-top: 3px; font-size: 11px; line-height: 14px;
  background: linear-gradient(to bottom, transparent 49px, #999 49px, #999 50px, transparent 50px) 100% 0 / 7px 100px no-repeat, linear-gradient(to bottom, transparent 9px, #999 9px) 100% 0 / 3px 10px repeat-y; }
.vruler > .vneg { height: 25px; border: 0; background: #f5f5f5 linear-gradient(to bottom, transparent 9px, #999 9px) 100% -4px / 3px 10px repeat-y; }
.vruler span { display: block; writing-mode: vertical-rl; transform: rotate(180deg); width: 14px; text-align: right; }
.canvas { position: relative; overflow: hidden; background: #e6e6e6; }
.sheet { position: absolute; inset: 25px 0 0 77px; background: #fff; }
.dots { position: absolute; inset: 5px 0 0 7px; background: conic-gradient(from 0deg at 1px 1px, transparent 270deg, #00c 270deg) 0 0 / 10px 10px; }
.frame { position: absolute; left: 77px; top: 32px; width: 600px; height: 338px; border: 1px solid #0a8ad6; display: grid; grid-template: 1fr 16px / 1fr 17px; background: #fff; }
.content { border-top: 1px solid #bbb; }
.vbar, .hbar { background: #ededed; border: 0 solid #e2e2e2; display: flex; justify-content: space-between; align-items: center; }
.vbar { flex-direction: column; padding: 6px 0 5px; border-left-width: 1px; border-top: 1px solid #bbb; }
.hbar { padding: 0 4px 0 6px; border-top-width: 1px; }
.arr { width: 9px; height: 6px; fill: #777; }
.arrh { width: 6px; height: 9px; fill: #777; }
.hd { position: absolute; width: 7px; height: 7px; background: #fff; border: 1px solid #0a8ad6; }
.n { top: -4px; } .m { top: 165px; } .s { bottom: -4px; }
.w { left: -4px; } .c { left: 296px; } .e { right: -4px; }

.right { width: 274px; flex: none; border-left: 1px solid #ddd; display: flex; flex-direction: column; }
.right .tabs { flex: none; justify-content: space-between; }
.right .tab { gap: 3px; }
.name { flex: none; height: 37px; border-bottom: 1px solid #ddd; display: flex; align-items: center; padding: 0 16px 0 15px; }
.name input { flex: 1; min-width: 0; border: 0; padding: 3px 0 0; font-size: 14px; height: 30px; }
.name input::placeholder { color: #999; }
.scroll { flex: 1; min-height: 0; position: relative; overflow: hidden; }
.thumb { position: absolute; right: 2px; top: 2px; width: 7px; height: 297px; border-radius: 3px; background: #aaa; z-index: 1; }
.scroll section { border-bottom: 1px solid #ddd; padding: 8px 15px 0 28px; }
.row { display: flex; align-items: center; }
.scroll h2 { font-size: 11px; font-weight: 400; line-height: 14px; color: #999; margin-left: -13px; display: flex; align-items: center; gap: 6px; }
.scroll .geo { padding: 15px 15px 12px 28px; }
.aligns { display: flex; gap: 14px; padding-left: 7px; margin-bottom: 16px; }
.aligns svg { width: 14px; height: 14px; fill: #d5d5d5; }
.geo .row + .row { margin-top: 11px; }
.geo label { flex: none; width: 10px; font-size: 9px; margin-left: 2px; }
.slot { width: 23px; flex: none; padding-left: 5px; }
.rot { margin-right: 4px; }
.rad { margin: 0 4px 0 11px; }
.scroll .inner { padding-bottom: 17px; display: flex; flex-direction: column; }
.link { color: inherit; font-size: 12px; line-height: 18px; margin-top: 8px; align-self: flex-start; text-decoration: underline; text-underline-offset: 2px; }
.check { display: flex; align-items: center; gap: 6px; line-height: 18px; font-size: 11px; margin: 9px 0 12px; }
.check input { appearance: none; width: 11px; height: 11px; border: 1px solid #888; border-radius: 3px; margin-left: 1px; }
.s1 { margin-bottom: 13px; }
.active select { background: #fff; border: 1px solid #2a6ef5; padding: 2px 20px 0 4px; }
.active > svg { color: #2a6ef5; }
.menu { position: absolute; z-index: 2; left: 1px; right: 1px; top: 28px; background: #fff; border-top: 1px solid #ddd; box-shadow: 0 2px 8px rgba(0, 0, 0, .45); }
.menu li { height: 26px; line-height: 28px; padding-left: 10px; }
.menu .sel { background: #dff2fd; }
.scroll .part { min-height: 73px; }
.scroll .opac { padding-bottom: 14px; }
.opac .row { margin: 8px 0 0 2px; gap: 8px; }
input[type="range"] { appearance: none; flex: 1; min-width: 0; height: 10px; background: linear-gradient(#ddd, #ddd) 0 50% / 100% 3px no-repeat; border-radius: 2px; }
input[type="range"]::-webkit-slider-thumb { appearance: none; width: 10px; height: 10px; border-radius: 50%; background: #ccc; border: 2px solid #eee; }
.scroll .type { border: 0; }
.type > .pick { margin: 8px 0 11px; }
.type .grow { flex: 1; margin-right: 20px; }
.next { display: flex; margin-top: 18px; height: 26px; gap: 13px; }
.next i { background: #f2f2f2; }
.next .n1 { width: 36px; background: #ddd; } .n2 { width: 66px; } .n3 { width: 48px; }
```
